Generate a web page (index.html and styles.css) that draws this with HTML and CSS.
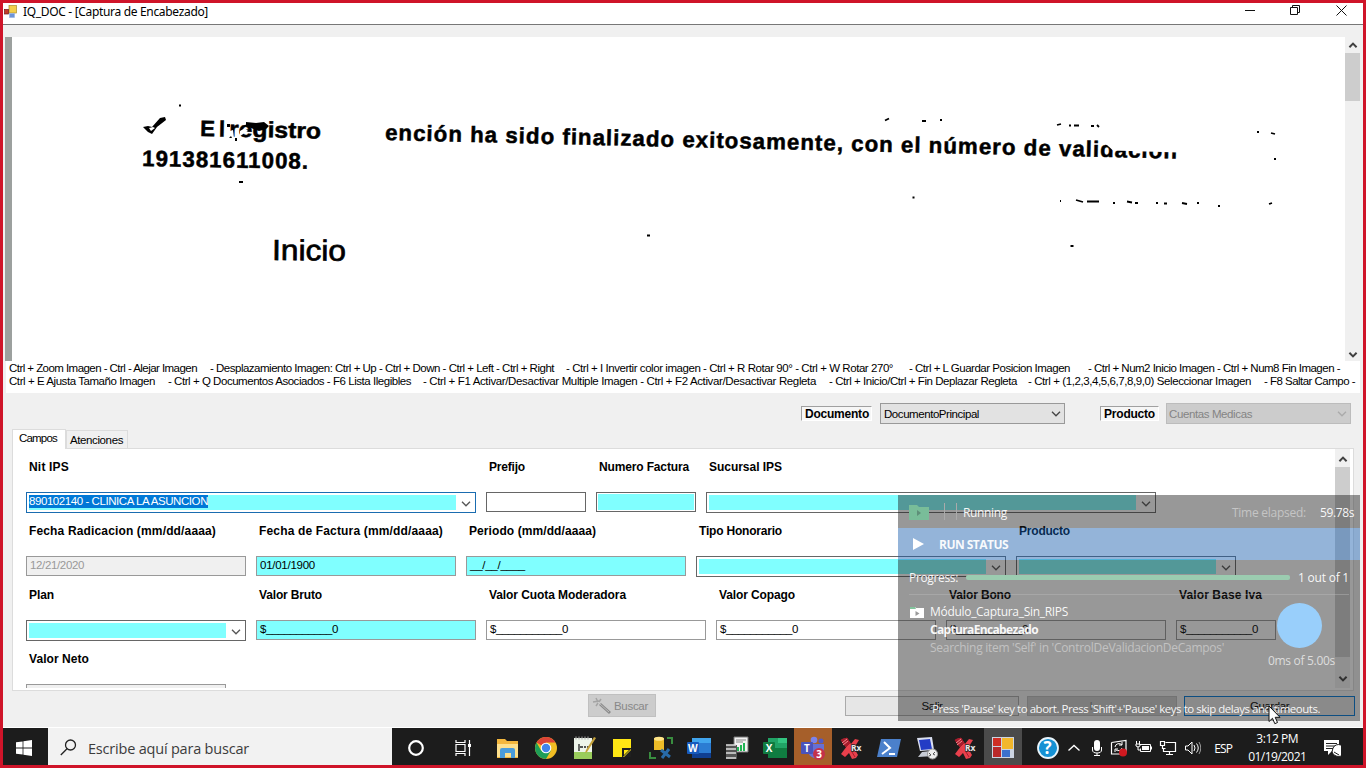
FILE: index.html
```html
<!DOCTYPE html>
<html lang="es">
<head>
<meta charset="utf-8">
<title>IQ_DOC - [Captura de Encabezado]</title>
<link rel="stylesheet" href="styles.css">
</head>
<body>
<svg class="defs" width="0" height="0">
  <symbol id="down" viewBox="0 0 10 6"><path d="M1 .8 5 4.8 9 .8" fill="none" stroke="currentColor" stroke-width="1.3"/></symbol>
  <symbol id="up" viewBox="0 0 10 6"><path d="M1.4 5.2 5 1.6 8.6 5.2" fill="none" stroke="currentColor" stroke-width="2"/></symbol>
  <symbol id="downb" viewBox="0 0 10 6"><path d="M1.4 .8 5 4.4 8.6 .8" fill="none" stroke="currentColor" stroke-width="2"/></symbol>
  <symbol id="pestle" viewBox="0 0 24 24"><path d="M3 3 8 2l4 6 4-5 4 1-5 8 4 7-2 3-4 1-3-6-4 4-4-3 6-8z" fill="#e8404c"/><path d="M2 4 8 2l3 5-4 4zM6 21l3-3M13 16l3 5" fill="#a81c2c" stroke="#a81c2c"/><path d="m3 7 5-4M4 9l5-4" stroke="#f58a90" stroke-width="1"/></symbol>
</svg>
<div class="screen">
  <header class="titlebar">
    <svg class="app" width="13" height="14" viewBox="0 0 13 14"><rect x="5" y="0.500" width="7.500" height="7.500" fill="#f4cf4c" stroke="#a98b2c" stroke-width=".7"/><rect x=".5" y="4.500" width="4" height="4.500" fill="#c33b2c" stroke="#6e1a14" stroke-width=".7"/><rect x="5.500" y="8.500" width="5" height="4" fill="#6e94d8" stroke="#9bb5e4" stroke-width=".7"/></svg>
    <h1 data-w="185">IQ_DOC - [Captura de Encabezado]</h1>
    <svg class="winctl" width="110" height="14" viewBox="0 0 110 14" fill="none" stroke="#111"><path d="M5 7.500h10"/><path d="M50.500 4.500h7v7h-7zM52.500 4.500v-2h7v7h-2"/><path d="m96.500 2.500 10 10m0-10-10 10"/></svg>
  </header>
  <main>
    <section class="viewer">
      <div class="edge"></div>
      <svg class="scan" width="1333" height="324" viewBox="12 37 1333 324">
        <g class="bold">
          <text x="200" y="136" textLength="25" lengthAdjust="spacing" transform="rotate(1.300 201 135)">El</text>
          <text x="229" y="136.500" textLength="92" lengthAdjust="spacingAndGlyphs" transform="rotate(1.300 230 136)">registro</text>
          <text x="142" y="166" textLength="166" lengthAdjust="spacing" transform="rotate(1 142 165)">191381611008.</text>
          <text x="385" y="140" textLength="792" lengthAdjust="spacing" transform="rotate(1.350 385 139)">ención ha sido finalizado exitosamente, con el número de validación</text>
        </g>
        <text class="inicio" x="272" y="260" textLength="74" lengthAdjust="spacingAndGlyphs" transform="rotate(.5 272 260)">Inicio</text>
        <path d="M1106 128v16l7 6.500 66 2 4-24z" fill="#fff"/>
        <path d="m226 129 4 2 3-1 1 8-7 1zM240 131l5-3 3 3-8 5z" fill="#fff"/>
        <path d="m246 122 10 1 8-1 5 4-3 3-7 2-8-3-5-2zM143 127l5-1 4 1 8-9 5-1 1 3-9 7-5 7-4-2zM227 124h3v3h-3zM229 138l2-2 1 2zM235 138h2v3h-2z"/>
        <path d="m149 128 2 3 4-3-2-1z" fill="#fff"/>
        <g class="specks"><path d="M179 105.500h2M239 182h4M647 235.500h3M912.500 197.500h2M885 120.500l4-2M922 121h4M940 120h2M1057 125l4-1M1069 125.500h2M1074 125.500h5M1091 126h3M1097 125l2 2M1257 132h2M1271 133l4 1M1274 159h2M1060 201h1M1076 200l7 2M1087 201.500h12M1113 203h2M1127 201.500l5 1M1135 203h3M1156 203h2M1164 203.500h3M1182 203l5 1M1197 203h2M1218 206h2M1269 204l3-1M1070.500 246h3"/></g>
      </svg>
      <div class="scroll"><svg class="arr" width="10" height="6"><use href="#up"/></svg><div class="thumb"></div><svg class="arr end" width="10" height="6"><use href="#downb"/></svg></div>
    </section>
    <section class="help">
      <div class="line one"><span data-w="188">Ctrl + Zoom Imagen - Ctrl - Alejar Imagen</span><span data-w="344">- Desplazamiento Imagen: Ctrl + Up - Ctrl + Down - Ctrl + Left - Ctrl + Right</span><span data-w="327">- Ctrl + I Invertir color imagen - Ctrl + R Rotar 90° - Ctrl + W Rotar 270°</span><span data-w="161">- Ctrl + L Guardar Posicion Imagen</span><span data-w="252">- Ctrl + Num2 Inicio Imagen - Ctrl + Num8 Fin Imagen -</span></div>
      <div class="line two"><span data-w="146">Ctrl + E Ajusta Tamaño Imagen</span><span data-w="243">- Ctrl + Q Documentos Asociados - F6 Lista Ilegibles</span><span data-w="393">- Ctrl + F1 Activar/Desactivar Multiple Imagen - Ctrl + F2 Activar/Desactivar Regleta</span><span data-w="188">- Ctrl + Inicio/Ctrl + Fin Deplazar Regleta</span><span data-w="223">- Ctrl + (1,2,3,4,5,6,7,8,9,0) Seleccionar Imagen</span><span data-w="91">- F8 Saltar Campo -</span></div>
    </section>
    <section class="tools">
      <label class="caption doc"><b data-w="64">Documento</b></label>
      <div class="drop"><span data-w="95">DocumentoPrincipal</span><svg width="10" height="6"><use href="#down"/></svg></div>
      <label class="caption prod"><b data-w="51">Producto</b></label>
      <div class="drop off"><span data-w="83">Cuentas Medicas</span><svg width="10" height="6"><use href="#down"/></svg></div>
    </section>
    <nav class="tabs"><span class="tab active"><i data-w="38">Campos</i></span><span class="tab"><i data-w="53">Atenciones</i></span></nav>
    <section class="panel">
      <div class="form">
        <div class="row">
          <div class="f w450"><b data-w="40">Nit IPS</b><div class="combo focus"><div class="fill"><span class="sel"><i data-w="179">890102140 - CLINICA LA ASUNCION</i></span></div><svg width="10" height="6"><use href="#down"/></svg></div></div>
          <div class="f w100"><b data-w="36">Prefijo</b><div class="box dark"></div></div>
          <div class="f w100"><b data-w="90">Numero Factura</b><div class="box dark inset"></div></div>
          <div class="f w450"><b data-w="73">Sucursal IPS</b><div class="combo"><div class="fill"></div><svg width="10" height="6"><use href="#down"/></svg></div></div>
        </div>
        <div class="row">
          <div class="f w220"><b data-w="187">Fecha Radicacion (mm/dd/aaaa)</b><div class="box off"><span data-w="54">12/21/2020</span></div></div>
          <div class="f w200"><b data-w="184">Fecha de Factura (mm/dd/aaaa)</b><div class="box cyan"><span data-w="55">01/01/1900</span></div></div>
          <div class="f w220"><b data-w="127">Periodo (mm/dd/aaaa)</b><div class="box cyan"><span data-w="55">__/__/____</span></div></div>
          <div class="f w310"><b data-w="83">Tipo Honorario</b><div class="combo"><div class="fill"></div><svg width="10" height="6"><use href="#down"/></svg></div></div>
          <div class="f w220"><b data-w="51">Producto</b><div class="combo"><div class="fill"></div><svg width="10" height="6"><use href="#down"/></svg></div></div>
        </div>
        <div class="row">
          <div class="f w220"><b data-w="25">Plan</b><div class="combo"><div class="fill"></div><svg width="10" height="6"><use href="#down"/></svg></div></div>
          <div class="f w220"><b data-w="63">Valor Bruto</b><div class="box cyan"><span data-w="78">$___________0</span></div></div>
          <div class="f w220"><b data-w="137">Valor Cuota Moderadora</b><div class="box"><span data-w="78">$___________0</span></div></div>
          <div class="f w220"><b data-w="76">Valor Copago</b><div class="box"><span data-w="78">$___________0</span></div></div>
          <div class="f w220"><b data-w="62">Valor Bono</b><div class="box"><span data-w="78">$___________0</span></div></div>
          <div class="f w100"><b data-w="83">Valor Base Iva</b><div class="box"><span data-w="78">$___________0</span></div></div>
        </div>
        <div class="row last"><div class="f w200"><b data-w="60">Valor Neto</b><div class="box off"></div></div></div>
      </div>
      <div class="scroll"><svg class="arr" width="10" height="6"><use href="#up"/></svg><div class="thumb"></div><svg class="arr end" width="10" height="6"><use href="#downb"/></svg></div>
    </section>
    <footer class="buttons">
      <button class="buscar"><svg width="20" height="18" viewBox="0 0 20 18"><path d="m8 7 10 9" stroke="#8b8b8b" stroke-width="3"/><path d="m8 7 9 8" stroke="#bbb"/><path d="m1 5 6-1M4 1l2 4M4 9l2-3M9 2 7 5" stroke="#a4a4a4" stroke-width="1.500"/></svg><span data-w="34">Buscar</span></button>
      <button class="salir"><span data-w="21">Salir</span></button>
      <button class="mid"><span>I</span></button>
      <button class="guardar"><span data-w="39">Guardar</span></button>
    </footer>
  </main>
  <footer class="taskbar">
    <div class="start"><svg width="16" height="16" viewBox="0 0 16 16" fill="#fff"><path d="M0 2.300 6.600 1.400v6.100H0zM7.400 1.300 16 0v7.500H7.400zM0 8.400h6.600v6.200L0 13.700zM7.400 8.400H16V16l-8.600-1.300z"/></svg></div>
    <div class="search"><svg width="17" height="17" viewBox="0 0 17 17" fill="none" stroke="#222" stroke-width="1.300"><circle cx="10.500" cy="6" r="5"/><path d="M7 9.700.8 16"/></svg><span data-w="161">Escribe aquí para buscar</span></div>
    <div class="ico cortana"><svg viewBox="0 0 24 24" fill="none" stroke="#fff" stroke-width="2.200"><circle cx="12" cy="12" r="6.800"/></svg></div>
    <div class="ico view"><svg viewBox="0 0 24 24" fill="none" stroke="#fff" stroke-width="1.200"><path d="M5 8.500h9v7H5zM5 4v2.500h9V4M5 20v-2.500h9V20M18.500 4v16"/><path d="M17 8h3v3h-3z" fill="#fff" stroke="none"/></svg></div>
    <div class="ico"><svg viewBox="0 0 24 24"><path d="M1 3h8l2 2h11v17H1z" fill="#f3b73e"/><path d="M1 8h21v13H1z" fill="#fde08d"/><path d="M4 22v-8q0-2 2-2h11q2 0 2 2v8h-4v-5H9v5z" fill="#4a9cdb"/></svg></div>
    <div class="ico"><svg viewBox="0 0 24 24"><circle cx="12" cy="12" r="11" fill="#f1bd23"/><path d="M12 12 2.500 6.500A11 11 0 0 1 21.500 6.500H12z" fill="#dc4437"/><path d="M2.500 6.500A11 11 0 0 0 12 23l4.800-8.300L12 12 7.200 14.700z" fill="#1e9e58"/><circle cx="12" cy="12" r="5.300" fill="#fff"/><circle cx="12" cy="12" r="4.200" fill="#4285ea"/></svg></div>
    <div class="ico"><svg viewBox="0 0 24 24"><path d="M2 2h18v21H2z" fill="#eef5ea"/><path d="M2 16h18v7H2z" fill="#9acd5c"/><path d="M4 .5v3M7 .5v3M10 .5v3M13 .5v3M16 .5v3" stroke="#aaa"/><path d="M7 8v7M8 11h3M12 11h2M15 11h2" stroke="#222" stroke-width="1.300"/><path d="m22 1 2 1-9 14-2 1 1-3z" fill="#c5a23b"/></svg></div>
    <div class="ico"><svg viewBox="0 0 24 24"><path d="M3 3h18v18H3z" fill="#ffe714"/><path d="M12 12h9v1l-8 8h-1z" fill="#202020"/><path d="M21 14v7h-7z" fill="#202020"/><path d="M12 12h9l-9 9z" fill="#202020"/><path d="M14 14h5l-5 5z" fill="#ffe714"/></svg></div>
    <div class="ico"><svg viewBox="0 0 24 24"><path d="M5 2h10v12H5z" fill="#eebc28"/><ellipse cx="10" cy="2.800" rx="5" ry="2" fill="#ffe588"/><path d="m12 14 9 7M20 13l-7 9" stroke="#286aa8" stroke-width="3"/><path d="M18 2h5v6M1 16v6h6" fill="none" stroke="#398d3f" stroke-width="2"/></svg></div>
    <div class="ico"><svg viewBox="0 0 24 24"><path d="M5 2h19v20H5z" fill="#2b7cd3"/><path d="M5 2h19v5H5z" fill="#41a5ee"/><path d="M5 17h19v5H5z" fill="#103f91"/><rect x="0" y="6" width="12" height="12" rx="1" fill="#185abd"/><text x="1" y="15.500" font-size="10" font-weight="bold" fill="#fff">W</text></svg></div>
    <div class="ico"><svg viewBox="0 0 24 24"><path d="M9 1h14v15H9z" fill="#f2f2f2" stroke="#777"/><path d="M11 4h10M11 6h7" stroke="#888"/><path d="M13 15v-4M16 15V9M19 15V7" stroke="#22b455" stroke-width="2"/><path d="M1 9h11v14H1z" fill="#555"/><path d="M1 9h10M1 13h10M1 17h10M1 22h10" stroke="#ddd" stroke-width="1.500"/></svg></div>
    <div class="ico"><svg viewBox="0 0 24 24"><path d="M5 2h19v20H5z" fill="#21a366"/><path d="M5 12h19v10H5z" fill="#107c41"/><path d="M15 2h9v5h-9z" fill="#33c481"/><rect x="0" y="6" width="12" height="12" rx="1" fill="#107c41"/><text x="2.800" y="15.500" font-size="10" font-weight="bold" fill="#fff">X</text></svg></div>
    <div class="ico teams"><svg viewBox="0 0 24 24"><circle cx="13" cy="4" r="3.300" fill="#7b83eb"/><circle cx="20" cy="5" r="2.500" fill="#5059c9"/><path d="M7 8h16v9q-2 5-8 5t-8-6z" fill="#6670d5"/><rect x="0" y="6" width="12" height="12" rx="1" fill="#4b53bc"/><text x="3" y="15.500" font-size="10" font-weight="bold" fill="#fff">T</text><circle cx="18" cy="18" r="6" fill="#c4314b"/><text x="15.200" y="21.500" font-size="10" font-weight="bold" fill="#fff">3</text></svg></div>
    <div class="ico"><svg viewBox="0 0 24 24"><use href="#pestle"/><text class="rx" x="12" y="15">Rx</text></svg></div>
    <div class="ico"><svg viewBox="0 0 24 24"><path d="M4 3h20l-4 18H0z" fill="#4b80cb"/><path d="m7 6 6 6-8 6M12 18h6" fill="none" stroke="#fff" stroke-width="2"/></svg></div>
    <div class="ico"><svg viewBox="0 0 24 24"><path d="m2 2 15-1 2 13-14 1z" fill="#dbe0f0"/><path d="m4 4 11-1 2 10-11 1z" fill="#243cc5"/><path d="m7 16 9-1 3 5-16 1z" fill="#c8ccd5"/><circle cx="17.500" cy="18" r="5" fill="#eee" stroke="#999"/><path d="m14 17 2 2-2 1M20 16l-2 2 2 1" fill="none" stroke="#555"/></svg></div>
    <div class="ico"><svg viewBox="0 0 24 24"><use href="#pestle"/><text class="rx" x="12" y="15">Rx</text></svg></div>
    <div class="ico active"><svg viewBox="0 0 24 24"><path d="M1 1h22v21H1z" fill="#ccd4e2"/><path d="M2 2h8v8H2z" fill="#cf2e25"/><path d="M11 2h11v11H11z" fill="#f2b72c"/><path d="M2 11h8v10H2z" fill="#b9292b"/><path d="M11 14h8v7h-8z" fill="#3b70cd"/></svg></div>
    <div class="tray">
      <svg width="24" height="24" viewBox="0 0 24 24"><circle cx="12" cy="12" r="10" fill="#1491d4" stroke="#e9f5fc" stroke-width="1.800"/><text x="7.500" y="18" font-size="17" font-weight="bold" fill="#fff">?</text></svg>
      <svg width="14" height="24" viewBox="0 0 14 24"><path d="m1.500 14.500 5.500-5 5.500 5" fill="none" stroke="#fff" stroke-width="1.400"/></svg>
      <svg width="12" height="24" viewBox="0 0 12 24"><rect x="3" y="4" width="6" height="11" rx="3" fill="#fff"/><path d="M1.500 11v3q0 3 4.500 3t4.500-3v-3M6 17v3M3 19.500h6" fill="none" stroke="#fff"/></svg>
      <svg width="18" height="24" viewBox="0 0 18 24"><path d="M1.500 6.500 16 4.500v12M1.500 6.500V18H10" fill="none" stroke="#fff" stroke-width="1.200"/><path d="M5 11a4 4 0 0 1 7-2M12 12a4 4 0 0 1-6 2M12 6v3H9M5 16v-3h3" fill="none" stroke="#fff"/><circle cx="13" cy="16.500" r="4" fill="#d01920"/></svg>
      <svg width="17" height="24" viewBox="0 0 17 24"><path d="M4.500 8.500h11v7h-10v-3M16.500 10.500v3M1.500 5v3M4.500 5v3M1 8h4v2q-2 2-4 0zM3 11v3h2" fill="none" stroke="#fff"/><path d="M7 10h7v4H7z" fill="#fff"/></svg>
      <svg width="18" height="24" viewBox="0 0 18 24"><path d="M6.500 6.500h10v9h-12v-3M10.500 15.500v3M7 18.500h7M1.500 5.500h4v4h-4zM3.500 9.500v3h3" fill="none" stroke="#fff" stroke-width="1.200"/></svg>
      <svg width="17" height="24" viewBox="0 0 17 24"><path d="M1.500 10h2.500l4-4v12l-4-4H1.500zM10 9q2 3 0 6M12.500 7.500q3.500 4.500 0 9" fill="none" stroke="#fff"/><path d="M15 6q3.500 6 0 12" fill="none" stroke="#999"/></svg>
    </div>
    <span class="lang"><i data-w="18">ESP</i></span>
    <div class="clock"><span data-w="42">3:12 PM</span><span data-w="58">01/19/2021</span></div>
    <div class="note"><svg width="18" height="18" viewBox="0 0 18 18"><path d="M1 1h15v11H9l-4 4v-4H1z" fill="#fff"/><path d="M3 4.500h11M3 7h11M3 9.500h7" stroke="#222"/><path d="M10 9a6 6 0 1 1 3 8q-3-1-4-4z" fill="#fff" stroke="#1c1c1c"/><path d="m11 13 5 3" stroke="#1c1c1c"/></svg></div>
  </footer>
  <aside class="overlay">
    <div class="ohead"><svg width="20" height="16" viewBox="0 0 20 16"><path d="M0 1h8l2 2h10v13H0z" fill="#79bd99"/><path d="m8 6 4 3-4 3z" fill="#5e8f79"/></svg><u></u><u class="second"></u><span class="run" data-w="44">Running</span><span class="dim" data-w="74">Time elapsed:</span><span class="time" data-w="34">59.78s</span></div>
    <div class="ostat"><svg width="12" height="12" viewBox="0 0 12 12"><path d="M0 0 11 6 0 12z" fill="#fff"/></svg><b data-w="69">RUN STATUS</b></div>
    <div class="obody">
      <div class="prog"><span data-w="49">Progress:</span><div class="bar"></div><span data-w="51">1 out of 1</span></div>
      <div class="info">
        <div class="names"><p class="mod"><svg width="14" height="11" viewBox="0 0 14 11"><path d="M0 0h5l1 1h8v10H0z" fill="#fff"/><path d="M0 0h5l1 2H0z" fill="#83c49d"/><path d="m5.500 4 4 2.500-4 2.500z" fill="#9a9a9a"/></svg><span data-w="138">Módulo_Captura_Sin_RIPS</span></p><p class="cap"><b data-w="108">CapturaEncabezado</b></p><p class="srch"><span data-w="294">Searching item 'Self' in 'ControlDeValidacionDeCampos'</span></p></div>
        <div class="timer"><div class="disc"></div><span data-w="67">0ms of 5.00s</span></div>
      </div>
      <p class="hint"><span data-w="388">Press 'Pause' key to abort. Press 'Shift'+'Pause' keys to skip delays and timeouts.</span></p>
    </div>
  </aside>
  <svg class="cursor" width="13" height="20" viewBox="0 0 13 20"><path d="M1 1v15.500l3.500-3.200 2.300 5.400 2.700-1.200-2.300-5.200H12z" fill="#fff" stroke="#111"/></svg>
</div>
<script src="fit.js"></script>
</body>
</html>
```
FILE: styles.css
```css
* { box-sizing: border-box; }
body { margin: 0; font: 11.5px/14px "Liberation Sans", Arial, sans-serif; color: #000; }
h1, p { margin: 0; font-weight: normal; }
i, u { font-style: normal; text-decoration: none; }
[data-w] { white-space: pre; flex: none; display: inline-block; }
svg { flex: none; display: block; }
.defs { position: absolute; }
.screen { position: relative; width: 1366px; height: 768px; border: 3px solid #cf1429; background: #f0f0f0; display: flex; flex-direction: column; overflow: hidden; }
.titlebar { height: 22px; background: #fff; border-bottom: 1px solid #777; display: flex; align-items: flex-start; flex: none; padding-left: 1px; }
.titlebar .app { margin-top: 2px; }
.titlebar h1 { font: 12px/16px "Noto Sans", sans-serif; margin-left: 6px; margin-top: 1px; }
.winctl { margin: 0 13px 0 auto; }
main { flex: none; height: 703px; display: flex; flex-direction: column; padding-top: 12px; border-bottom: 1px solid #fff; }
.viewer { height: 324px; display: flex; margin: 0 3px 0 2px; flex: none; }
.edge { width: 7px; background: #9ca09e; }
.scan { background: #fff; font-family: "Liberation Sans", Arial, sans-serif; }
.scan .bold { font-size: 22.300px; font-weight: bold; stroke: #000; stroke-width: .5px; }
.scan .inicio { font-size: 29px; stroke: #000; stroke-width: .7px; }
.specks { fill: none; stroke: #000; stroke-width: 1.800px; }
.scroll { width: 15px; background: #f0f0f0; display: flex; flex-direction: column; color: #404040; }
.scroll .arr { margin: 5px 0 5px 3px; }
.scroll .thumb { height: 48px; background: #cdcdcd; }
.scroll .end { margin-top: auto; margin-bottom: 3px; }
.help { height: 32px; background: #fff; margin: 0 3px; flex: none; }
.line { display: grid; height: 13px; line-height: 14px; padding-left: 3px; }
.one { grid-template-columns: 201px 356px 343px 179px 1fr; }
.two { grid-template-columns: 159px 255px 406px 199px 236px 1fr; }
.tools { height: 37px; display: flex; padding: 10px 0 0 798px; flex: none; }
.caption { height: 15px; margin-top: 3px; border: 1px solid #a0a0a0; border-right-color: #fff; border-bottom-color: #fff; background: #f6f6f6; padding-left: 3px; line-height: 14px; font-size: 12px; }
.doc { width: 71px; margin-right: 8px; margin-left: 0; }
.prod { width: 59px; margin: 3px 7px 0 35px; }
.drop { width: 185px; height: 21px; border: 1px solid #999; background: #e2e2e2; padding: 3px 3px 0 3px; display: flex; justify-content: space-between; color: #444; }
.drop svg { margin-top: 4px; }
.drop span { color: #000; }
.drop.off { background: #ccc; border-color: #bcbcbc; color: #aaa; padding-left: 2px; }
.drop.off span { color: #848484; }
.tabs { height: 18px; display: flex; align-items: flex-end; padding-left: 9px; flex: none; }
.tab { height: 18px; width: 62px; border: 1px solid #dcdcdc; border-bottom: 0; padding: 2px 0 0 3px; background: #f0f0f0; }
.tab.active { height: 20px; width: 54px; background: #fff; padding: 1px 0 0 6px; margin-bottom: -1px; z-index: 1; }
.panel { width: 1342px; height: 243px; margin-left: 9px; border: 1px solid #dcdcdc; background: #fff; display: flex; justify-content: space-between; flex: none; padding-bottom: 2px; }
.form { padding: 11px 0 0 13px; overflow: hidden; height: 239px; }
.row { display: flex; gap: 10px; height: 64px; }
.row.last { height: 32px; }
.f { flex: none; }
.f > b { display: block; width: max-content; margin: 0 0 18px 3px; height: 14px; font-size: 12px; }
.w450 { width: 450px; } .w100 { width: 100px; } .w220 { width: 220px; } .w200 { width: 200px; } .w310 { width: 310px; }
.combo { height: 21px; border: 1px solid #666; padding: 2px; display: flex; }
.combo svg { margin: 6px 2px 0 5px; color: #555; }
.focus { border-color: #1a6cb0; }
.fill { flex: 1; background: #80ffff; }
.sel { display: inline-block; background: #0078d7; color: #fff; height: 13px; line-height: 13px; vertical-align: top; }
.box { height: 20px; border: 1px solid #999; background: #fff; padding: 1px 0 0 3px; }
.box.dark { border-color: #666; }
.box.inset { background: #80ffff; box-shadow: inset 0 0 0 1px #fff; }
.box.cyan { background: #80ffff; }
.box.off { background: #f0f0f0; color: #999; }
.panel .scroll { width: 15px; margin-right: 3px; }
.panel .scroll .arr { margin-top: 7px; }
.panel .scroll .thumb { height: 190px; }
.panel .scroll .end { margin-top: 19px; }
.buttons { height: 36px; display: flex; padding: 4px 0 0 585px; }
button { font: inherit; color: #000; padding: 0; background: #e6e6e6; border: 1px solid #aaa; height: 20px; margin: 0; display: flex; justify-content: center; line-height: 18px; }
.buscar { height: 23px; width: 68px; margin: -1px 189px 0 0; background: #ccc; border-color: #c0c0c0; color: #888; align-items: center; justify-content: flex-start; padding-left: 3px; gap: 2px; }
.buttons .salir { width: 174px; margin: 1px 8px 0 0; }
.buttons .mid { width: 150px; margin: 1px 7px 0 0; background: #ccc; border-color: #bbb; color: #888; padding-right: 22px; }
.buttons .guardar { width: 171px; margin-top: 1px; border-color: #0078d7; }
.taskbar { flex: none; height: 37px; background: #1c1c1c; display: flex; color: #fff; font-family: "Open Sans", sans-serif; }
.start { width: 45px; display: flex; align-items: center; padding-left: 13px; padding-top: 3px; }
.search { width: 344px; background: #f2f2f2; display: flex; padding: 11px 0 0 12px; gap: 11px; color: #3c3c3c; font-size: 14.500px; line-height: 19px; }
.ico { width: 38.080px; display: flex; align-items: center; justify-content: center; padding-top: 3px; flex: none; }
.ico svg { width: 24px; height: 24px; font-family: "Open Sans", sans-serif; }
.rx { font-size: 8.500px; font-weight: bold; fill: #e8e8e8; stroke: #222; stroke-width: 1.600px; paint-order: stroke; }
.cortana { margin-left: 5px; }
.view { margin: 0 7px 0 9px; }
.ico.teams { background: #a65f2a; }
.ico.active { background: #4b4b4b; }
.tray { display: flex; align-items: center; padding: 3px 0 0 14px; gap: 7px; }
.tray svg { font-family: "Open Sans", sans-serif; }
.tray svg:nth-child(3) { margin-left: 3px; }
.lang { font-size: 12px; padding: 14px 0 0 13px; line-height: 14px; }
.clock { display: flex; flex-direction: column; align-items: center; width: 60px; margin-left: 15px; font-size: 12px; line-height: 18px; padding-top: 2px; }
.note { padding: 11px 0 0 16px; }
.overlay { position: absolute; left: 895px; top: 492px; width: 462px; height: 226px; color: rgba(255,255,255,.94); font: 12px/16px "Open Sans", sans-serif; }
.ohead { height: 33px; background: rgba(28,28,28,.455); display: flex; align-items: center; padding-left: 11px; }
.ohead u { width: 1px; height: 17px; background: #aaa; margin-left: 15px; }
.ohead u.second { margin-left: 11px; }
.run { margin: 2px 0 0 6px; }
.dim { margin: 2px 0 0 auto; color: #c5c5c5; }
.time { margin: 2px 6px 0 14px; }
.ostat { height: 32px; background: rgba(22,91,172,.46); display: flex; align-items: center; padding-left: 15px; gap: 14px; }
.ostat b { margin-top: 2px; }
.obody { height: 161px; background: rgba(28,28,28,.455); padding: 9px 11px 0; }
.prog { display: flex; align-items: center; gap: 8px; height: 17px; }
.bar { width: 324px; height: 5px; background: #9bccb0; border-radius: 2px; }
.info { margin-top: 8px; border-top: 1px solid rgba(190,190,190,.4); height: 98px; display: flex; justify-content: space-between; }
.names { padding-top: 8px; line-height: 18px; }
.mod { display: flex; align-items: center; gap: 6px; margin-left: 1px; }
.cap, .srch { padding-left: 21px; }
.srch { color: #c2c2c2; }
.timer { width: 95px; display: flex; flex-direction: column; align-items: center; padding-top: 8px; color: #ddd; }
.disc { width: 45px; height: 45px; border-radius: 50%; background: #99cffb; margin: 0 5px 5px 0; }
.hint { padding: 9px 0 0 23px; font-size: 11.500px; }
.cursor { position: absolute; left: 1265px; top: 702px; }
```
FILE: fit.js
```js
// Spreads the letters of each caption so that it fills its nominal width.
document.querySelectorAll('[data-w]').forEach(function (el) {
  var range = document.createRange();
  range.selectNodeContents(el);
  var extra = Number(el.dataset.w) - range.getBoundingClientRect().width;
  el.style.letterSpacing = (extra / el.textContent.length) + 'px';
});
```
